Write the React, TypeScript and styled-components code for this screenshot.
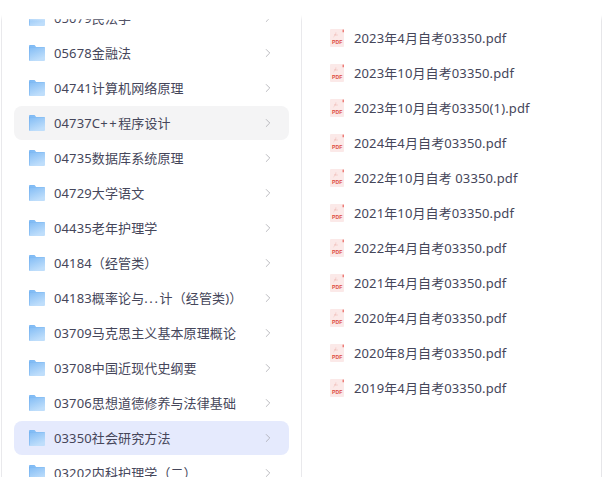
import styled, { createGlobalStyle } from 'styled-components'
import { ChevronRight } from 'lucide-react'

const folders = [
  { name: '05079民法学' },
  { name: '05678金融法' },
  { name: '04741计算机网络原理' },
  { name: '04737C++程序设计', state: 'hover' },
  { name: '04735数据库系统原理' },
  { name: '04729大学语文' },
  { name: '04435老年护理学' },
  { name: '04184（经管类）' },
  { name: '04183概率论与...计（经管类)）' },
  { name: '03709马克思主义基本原理概论' },
  { name: '03708中国近现代史纲要' },
  { name: '03706思想道德修养与法律基础' },
  { name: '03350社会研究方法', state: 'active' },
  { name: '03202内科护理学（二）' },
]

const files = [
  '2023年4月自考03350.pdf',
  '2023年10月自考03350.pdf',
  '2023年10月自考03350(1).pdf',
  '2024年4月自考03350.pdf',
  '2022年10月自考 03350.pdf',
  '2021年10月自考03350.pdf',
  '2022年4月自考03350.pdf',
  '2021年4月自考03350.pdf',
  '2020年4月自考03350.pdf',
  '2020年8月自考03350.pdf',
  '2019年4月自考03350.pdf',
]

const FolderIcon = () => (
  <svg width="16" height="16" viewBox="0 0 16 16">
    <defs>
      <linearGradient id="folderFill" x1="0" y1="0" x2="0.4" y2="1">
        <stop offset="0" stopColor="#79b7f4" />
        <stop offset="1" stopColor="#bfdefb" />
      </linearGradient>
    </defs>
    <path
      d="M0 1a1 1 0 0 1 1-1h4.6l1.6 2H15a1 1 0 0 1 1 1v12a1 1 0 0 1-1 1H1a1 1 0 0 1-1-1z"
      fill="url(#folderFill)"
    />
    <path d="M0.4 2v13.5" stroke="#6aabef" strokeWidth="0.8" opacity="0.6" />
    <path d="M0 2.6h16" stroke="#6fb0f0" strokeWidth="0.6" opacity="0.5" />
  </svg>
)

const PdfIcon = () => (
  <svg width="15" height="18" viewBox="0 0 15 18">
    <path d="M1 0h11l2 2v15a1 1 0 0 1-1 1H1a1 1 0 0 1-1-1V1a1 1 0 0 1 1-1z" fill="#fbe9e8" />
    <path d="M12.6 0.6h1.2v2.6h-1.2z" fill="#e8605a" />
    <path d="M3.5 8c1.5-1 2.5-3 2.4-4.6M4 5.6c1.2.4 2.6.6 3.8.4" stroke="#f0b8b4" strokeWidth="0.6" fill="none" />
    <text x="2" y="15" fontFamily="Liberation Sans, sans-serif" fontSize="6" fontWeight="700" fill="#dd4a42" textLength="10.5" lengthAdjust="spacingAndGlyphs">
      PDF
    </text>
  </svg>
)

// the reference font sets + and dots wider than Noto Sans does
const renderName = (name: string) =>
  name.split(/(\+\+|\.\.\.)/).map((part, i) =>
    i % 2 ? <Wide key={i}>{part}</Wide> : part,
  )

export default function App() {
  return (
    <>
      <GlobalStyle />
      <Shell>
        <FolderPanel>
          <FolderViewport>
            <FolderList>
              {folders.map((folder) => (
                <FolderRow key={folder.name} $state={folder.state}>
                  <FolderIcon />
                  <RowLabel>{renderName(folder.name)}</RowLabel>
                  <Arrow size={14} strokeWidth={1.25} />
                </FolderRow>
              ))}
            </FolderList>
          </FolderViewport>
        </FolderPanel>
        <FilePanel>
          {files.map((file) => (
            <FileRow key={file}>
              <PdfIcon />
              <RowLabel>{file}</RowLabel>
            </FileRow>
          ))}
        </FilePanel>
      </Shell>
    </>
  )
}

const GlobalStyle = createGlobalStyle`
  html, body {
    margin: 0;
    height: 100%;
    overflow: hidden;
    background: #fff;
  }
`

const Shell = styled.div`
  position: relative;
  display: flex;
  width: 601px;
  height: 462px;
  margin: 15px 0 0 1px;
  font-family: 'Noto Sans', 'Noto Sans CJK SC', sans-serif;
  font-size: 13px;
  letter-spacing: 0.12px;
  text-spacing-trim: space-all;
  color: #45465a;
  border-left: 1px solid #e9e9ec;
  border-right: 1px solid #e6e6e9;
  box-sizing: border-box;

  &::before {
    content: '';
    position: absolute;
    z-index: 1;
    top: 0;
    left: -1px;
    right: -1px;
    height: 6px;
    background: linear-gradient(#fff, rgba(255, 255, 255, 0));
  }
`

const FolderPanel = styled.div`
  width: 300px;
  flex-shrink: 0;
  box-sizing: border-box;
  padding: 4px 12px 0;
  border-right: 1px solid #e9e9ec;
`

const FolderViewport = styled.div`
  height: 100%;
  overflow: hidden;
`

const FolderList = styled.div`
  display: flex;
  flex-direction: column;
  gap: 1px;
  margin-top: -18px;
`

const FolderRow = styled.div<{ $state?: string }>`
  display: flex;
  align-items: center;
  flex-shrink: 0;
  gap: 9px;
  height: 34px;
  padding: 0 14px 0 15px;
  border-radius: 8px;
  background: ${({ $state }) =>
    $state === 'active' ? '#e5eafd' : $state === 'hover' ? '#f4f4f5' : 'transparent'};
`

const RowLabel = styled.span`
  flex: 1;
  white-space: pre;
  margin-top: -2px;
`

const Wide = styled.span`
  letter-spacing: 1.6px;
`

const Arrow = styled(ChevronRight)`
  color: #a2a2aa;
  flex-shrink: 0;
`

const FilePanel = styled.div`
  flex: 1;
  display: flex;
  flex-direction: column;
  gap: 1px;
  padding: 6px 0 0 28px;
`

const FileRow = styled.div`
  display: flex;
  align-items: center;
  gap: 9px;
  height: 34px;
`
